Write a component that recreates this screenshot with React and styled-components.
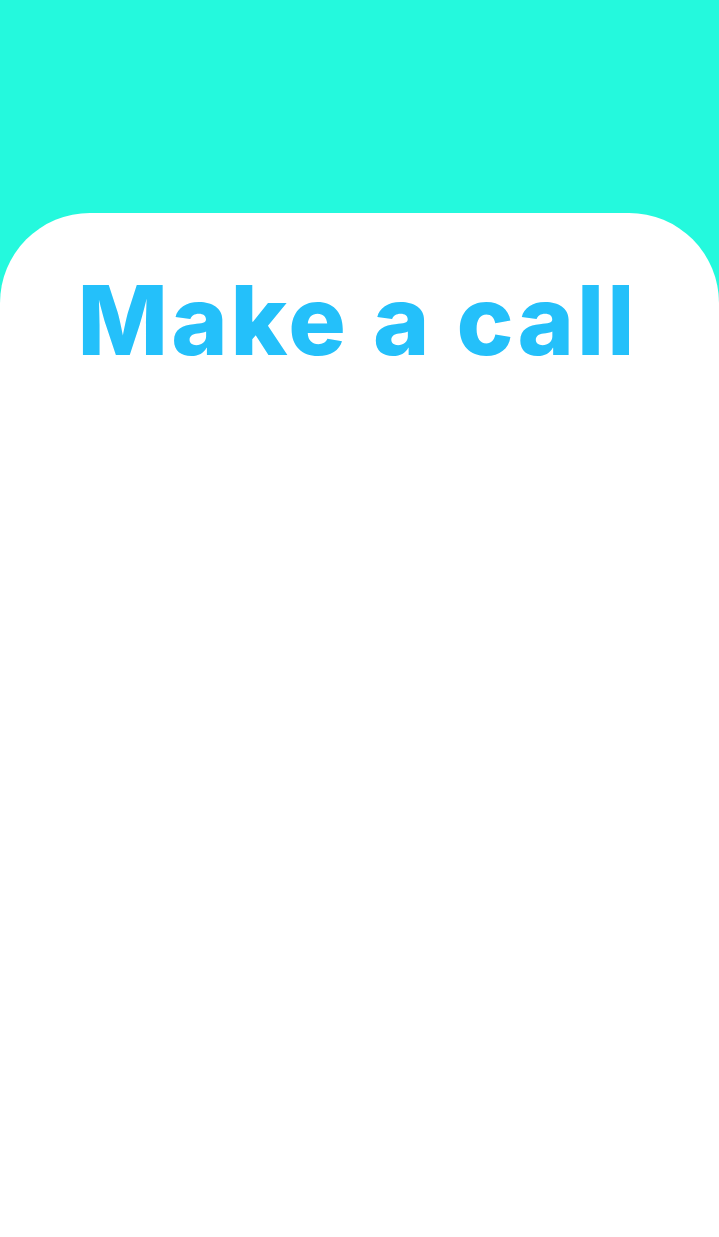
import React from 'react';
import styled, { createGlobalStyle } from 'styled-components';

const GlobalStyle = createGlobalStyle`
  html, body { margin: 0; padding: 0; }
  body { background: #24f9dd; font-family: "Inter", "Liberation Sans", sans-serif; }
`

const Screen = styled.div`
  min-height: 1237px;
  background: #24f9dd;
  display: flex;
  flex-direction: column;
  padding-top: 213px;
  box-sizing: border-box;
`

const Card = styled.div`
  flex: 1;
  background: #ffffff;
  border-radius: 90px 90px 0 0;
  display: flex;
  flex-direction: column;
  align-items: center;
  padding-top: 51px;
`

const Title = styled.h1`
  margin: 0 4px 0 0;
  font-family: "Inter", "Liberation Sans", sans-serif;
  font-weight: 800;
  font-size: 96px;
  line-height: 112px;
  letter-spacing: 3px;
  color: #24c0fa;
  white-space: nowrap;
`

const App = () => {
  return (
    <Screen>
      <GlobalStyle />
      <Card>
        <Title>Make a call</Title>
      </Card>
    </Screen>
  )
}

export default App;
